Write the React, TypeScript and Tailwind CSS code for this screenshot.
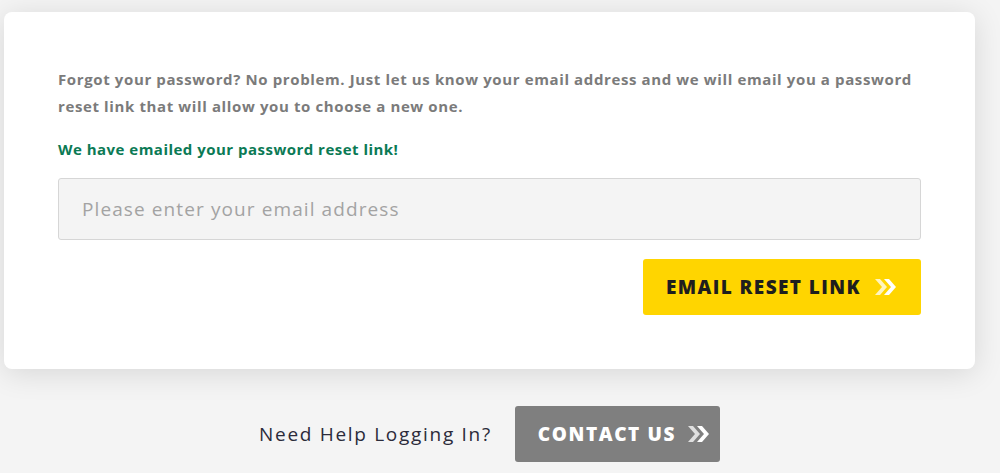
const Chevrons = ({ className = "" }: { className?: string }) => (
	<svg viewBox="0 0 24 20" className={className} aria-hidden="true">
		<polygon points="1,2 6,2 13,10 6,18 1,18 8,10" fill="currentColor" opacity="0.75" />
		<polygon points="10,2 15,2 22,10 15,18 10,18 17,10" fill="currentColor" />
	</svg>
);

export default function App() {
	return (
		<div className="min-h-[473px] bg-[#f4f4f4] pt-[12px] [font-family:'Open_Sans',sans-serif]">
			<div className="ml-[4px] w-[971px]">
				<div className="rounded-lg bg-white p-[54px] shadow-[0_4px_30px_rgba(0,0,0,0.12)]">
					<p className="text-[15px] leading-[27px] font-bold tracking-[0.62px] text-[#7b7b7b]">
						Forgot your password? No problem. Just let us know your email
						address and we will email you a password reset link that will
						allow you to choose a new one.
					</p>
					<p className="mt-[16px] text-[15px] leading-[27px] font-bold tracking-[0.48px] text-[#0b7a55]">
						We have emailed your password reset link!
					</p>
					<input
						type="email"
						placeholder="Please enter your email address"
						className="mt-[15px] block h-[62px] w-full rounded-[3px] border border-[#d6d6d6] bg-[#f4f4f4] px-[23px] text-[19px] tracking-[1.1px] text-[#333] outline-none placeholder:text-[#a3a3a3]"
					/>
					<div className="mt-[19px] flex justify-end">
						<button className="flex h-[56px] items-center gap-[13px] rounded-[3px] bg-[#ffd500] px-[23px] text-[19px] font-extrabold tracking-[1.4px] text-[#1e1e1e]">
							EMAIL RESET LINK
							<Chevrons className="h-[20px] w-[24px] text-white" />
						</button>
					</div>
				</div>
				<div className="mt-[37px] flex items-center justify-center gap-[23px]">
					<span className="text-[19px] tracking-[1.7px] text-[#2b2b3a]">Need Help Logging In?</span>
					<button className="flex h-[56px] items-center gap-[11px] rounded-[3px] bg-[#7f7f7f] pr-[9px] pl-[23px] text-[19px] font-extrabold tracking-[1.6px] text-white">
						CONTACT US
						<Chevrons className="h-[20px] w-[24px] text-white" />
					</button>
				</div>
			</div>
		</div>
	);
}
